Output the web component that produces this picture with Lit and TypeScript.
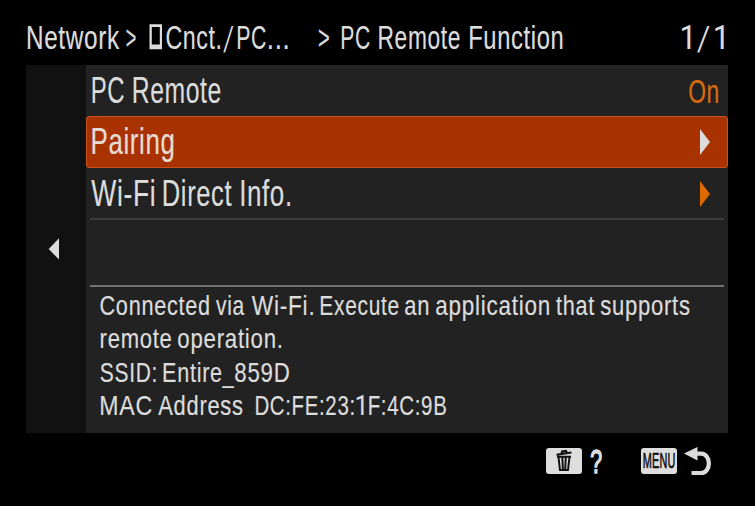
import { LitElement, html, css, svg } from "lit";
import { customElement, property } from "lit/decorators.js";

type Run = { t: string; from: number; to: number; f?: string };
const run = (t: string, from: number, to: number, f?: string): Run => ({ t, from, to, f });

const SANS = '"Liberation Sans", Arial, sans-serif';
const PLAIN_ONE = 'Roboto, "Liberation Sans", sans-serif';
const LIGHT_SLASH = '"DejaVu Sans Light", "DejaVu Sans", sans-serif';
const pen = document.createElement("canvas").getContext("2d")!;

/** One line of condensed lettering: every run is squeezed to span from..to. */
@customElement("condensed-line")
class CondensedLine extends LitElement {
  @property({ attribute: false }) runs: Run[] = [];
  @property({ type: Number }) size = 32;
  @property({ type: Number }) base = 30;
  @property({ type: Number }) spacing = 0.9;
  @property({ type: Number }) weight = 0.2;

  static styles = css`
    :host { display: block; }
    svg { display: block; width: 100%; height: 100%; overflow: visible; }
    text { fill: currentColor; stroke: currentColor; white-space: pre; }
  `;

  render() {
    return html`<svg>${this.runs.map((r) => {
      const family = r.f ?? SANS;
      const gap = r.t.length > 1 ? this.spacing : 0;
      // Measured large, so that rounding of the glyph bounds does not matter.
      pen.font = `${this.size * 10}px ${family}`;
      const m = pen.measureText(r.t);
      const left = -m.actualBoundingBoxLeft / 10;
      const ink = m.actualBoundingBoxRight / 10 - left + gap * (r.t.length - 1);
      const k = (r.to - r.from) / ink;
      const stroke = r.t === "/" ? 0 : this.weight;
      return svg`<text font-family=${family} font-size=${this.size} letter-spacing=${gap} stroke-width=${stroke}
        transform="translate(${r.from - left * k} ${this.base}) scale(${k} 1)">${r.t}</text>`;
    })}</svg>`;
  }
}

@customElement("app-root")
class AppRoot extends LitElement {
  static styles = css`
    :host { display: block; width: 755px; height: 506px; background: #000; color: #dcdcdc; overflow: hidden; }
    .screen { display: grid; grid-template-rows: 65px 368px 73px; height: 100%; padding: 0 27px 0 26px; box-sizing: border-box; }
    .head { display: grid; grid-template-columns: 123px 14px 1fr; align-items: start; }
    .head svg { margin-top: 24px; display: block; }
    .head condensed-line { height: 65px; }
    .panel { display: grid; grid-template-columns: 60px 1fr; background: #222; }
    .side { background: #111; padding: 173px 0 0 22px; }
    .side svg, .row svg { display: block; }
    .body { display: grid; grid-template-rows: 51px 52px 50px 69px 1fr; }
    .row { display: grid; grid-template-columns: 1fr 10px; padding-right: 18px; box-sizing: border-box; }
    .row condensed-line { height: 50px; }
    .row.value { grid-template-columns: 600px 1fr; padding: 0; }
    .value .on { color: #d86b10; }
    .picked { background: #a93202; border: 1px solid #c9531a; border-radius: 3px; padding-right: 17px; color: #e6dcd6; }
    .arrow { margin-top: 13px; }
    .picked .arrow { margin-top: 12px; }
    .blank { margin: 0 4px; border-top: 2px solid #3d3d3d; border-bottom: 2px solid #727272; box-sizing: border-box; }
    .info { display: grid; grid-template-rows: repeat(4, 33.3px); padding-left: 14px; }
    .foot { display: flex; padding: 15px 0 0 520px; align-items: flex-start; }
    .key { width: 36px; height: 26px; border-radius: 3px; background: #dedede; color: #111; }
    .help { width: 58.5px; height: 26px; }
    .back { margin: -1px 0 0 7px; }
  `;

  arrow(color: string) {
    return html`<svg class="arrow" width="10" height="26" viewBox="0 0 10 26"><path d="M0 0 10 13 0 26z" fill=${color} /></svg>`;
  }

  render() {
    return html`<div class="screen">
      <header class="head">
        <condensed-line .size=${32.6} .base=${49} .runs=${[run("Network", 1.8, 93.5), run(">", 100.7, 109.7)]}></condensed-line>
        <svg width="14" height="26" viewBox="0 0 14 26"><path fill="#dcdcdc" fill-rule="evenodd" d="M.5.3h12.500v25H.5zM2.800 3v17.500h8V3z" /></svg>
        <condensed-line .size=${32.6} .base=${49} .runs=${[
          run("Cnct.", 3.5, 57), run("/", 60.3, 70.5, LIGHT_SLASH), run("PC", 75, 102.7), run("...", 105.7, 124.5),
          run(">", 156, 166), run("PC", 179, 206.5), run("Remote", 216.3, 296.5), run("Function", 307, 399.5),
          run("1", 519, 527.2, PLAIN_ONE), run("/", 534, 546.5, LIGHT_SLASH), run("1", 552.2, 560.5, PLAIN_ONE),
        ]}></condensed-line>
      </header>
      <main class="panel">
        <nav class="side"><svg width="12" height="22" viewBox="0 0 12 22"><path d="M.7 11 11 .2v21.4z" fill="#dcdcdc" /></svg></nav>
        <section class="body">
          <div class="row value">
            <condensed-line .size=${37.8} .base=${37.8} .runs=${[run("PC", 6.6, 37.7), run("Remote", 47.6, 134.3)]}></condensed-line>
            <condensed-line class="on" .size=${33} .base=${37.7} .weight=${0.2} .runs=${[run("On", 3.2, 32)]}></condensed-line>
          </div>
          <div class="row picked">
            <condensed-line .size=${37.8} .base=${37.3} .runs=${[run("Pairing", 5.6, 86.5)]}></condensed-line>
            ${this.arrow("#dcdcdc")}
          </div>
          <div class="row">
            <condensed-line .size=${37.8} .base=${38} .runs=${[run("Wi-Fi", 5.3, 68), run("Direct", 77.8, 145.7), run("Info.", 155.2, 203.8)]}></condensed-line>
            ${this.arrow("#de6900")}
          </div>
          <div class="blank"></div>
          <div class="info">
            <condensed-line .size=${27} .base=${28.2} .runs=${[
              run("Connected", 0.5, 109), run("via", 116, 144.3), run("Wi-Fi.", 151.7, 212.7), run("Execute", 221, 298.3),
              run("an", 305, 328.3), run("application", 336, 449), run("that", 456, 494.3), run("supports", 500.5, 589.3),
            ]}></condensed-line>
            <condensed-line .size=${27} .base=${28.2} .runs=${[run("remote", 1, 71), run("operation.", 78, 181)]}></condensed-line>
            <condensed-line .size=${27} .base=${28.2} .runs=${[run("SSID:", 0.5, 55.5), run("Entire", 63.8, 121.3), run("_", 122.3, 134.3), run("859D", 135, 189)]}></condensed-line>
            <condensed-line .size=${27} .base=${28.2} .runs=${[
              run("MAC", 1, 51.3), run("Address", 58.3, 142.3), run("DC:FE:23:", 156, 253.3), run("1", 256.7, 263.5, PLAIN_ONE), run("F:4C:9B", 269.3, 346),
            ]}></condensed-line>
          </div>
        </section>
      </main>
      <footer class="foot">
        <svg class="key" viewBox="0 0 36 26"><path fill="none" stroke="#111" stroke-width="2" d="M10.5 6.800 25.500 4.500M15.500 5.500l.5-2 4-.6 1 1.800M11 8.700h14M12.500 9l1.500 13h8L23.500 9M16.300 9l.7 13M19.800 9l-.6 13" /></svg>
        <condensed-line class="help" .size=${34} .base=${25.3} .weight=${1.6} .runs=${[run("?", 8.8, 19.5)]}></condensed-line>
        <condensed-line class="key" .size=${22} .base=${20.3} .spacing=${0.5} .weight=${0.7} .runs=${[run("MENU", 2.6, 33.6)]}></condensed-line>
        <svg class="back" width="30" height="30" viewBox="0 0 30 30"><path fill="#dcdcdc" d="M0 6.500 13.500 0v13.500z" /><path fill="none" stroke="#dcdcdc" stroke-width="4.200" d="M10 6.700h7c10.500 0 10.500 19.300 0 19.300H7.500" /></svg>
      </footer>
    </div>`;
  }
}
